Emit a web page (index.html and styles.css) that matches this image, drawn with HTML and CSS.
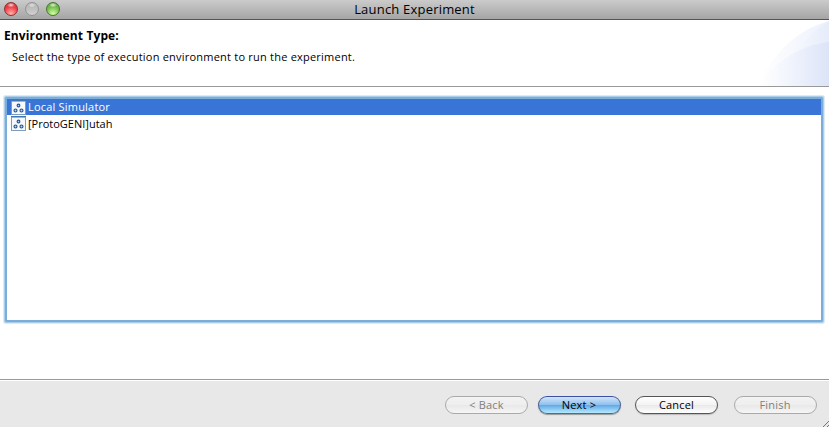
FILE: index.html
```
<!DOCTYPE html>
<html lang="en">
<head>
<meta charset="utf-8">
<title>Launch Experiment</title>
<link rel="stylesheet" href="styles.css">
</head>
<body>
<svg class="defs" width="0" height="0" aria-hidden="true">
  <symbol id="sim" viewBox="0 0 15 15">
    <rect x=".5" y=".5" width="14" height="14" fill="#f6fafd" stroke="#7e9cc0"/>
    <path d="M0 .5h15" stroke="#3f74b5"/>
    <path d="M1 1.5h13" stroke="#8fb8e6"/>
    <g fill="#b9d0ec" stroke="#26508c" stroke-width="1.1"><circle cx="7.5" cy="5.5" r="1.4"/><circle cx="4.5" cy="10.5" r="1.5"/><circle cx="10.5" cy="10.5" r="1.5"/></g>
  </symbol>
</svg>
<div class="window">
  <div class="titlebar">
    <div class="lights"><i class="light red"></i><i class="light gray"></i><i class="light green"></i></div>
    <span class="title">Launch Experiment</span>
  </div>
  <header class="header">
    <svg class="swoosh" width="75" height="66" viewBox="0 0 75 66" aria-hidden="true">
      <defs>
        <linearGradient id="g1"><stop offset="0" stop-color="#fff"/><stop offset="1" stop-color="#edf1fc"/></linearGradient>
        <linearGradient id="g2"><stop offset="0" stop-color="#f4f7fe" stop-opacity="0"/><stop offset="1" stop-color="#dce4f8"/></linearGradient>
      </defs>
      <path d="M5 66C18 34 42 10 75 1V66z" fill="url(#g1)"/>
      <path d="M28 66C36 37 52 14 75 1V66z" fill="url(#g2)" opacity=".4"/>
      <path d="M5 66C20 43 43 26 75 22V66z" fill="url(#g2)"/>
    </svg>
    <h1 class="heading">Environment Type:</h1>
    <p class="subtitle">Select the type of execution environment to run the experiment.</p>
  </header>
  <main class="content">
    <ul class="list">
      <li class="row selected"><svg class="icon"><use href="#sim"/></svg><span class="local">Local Simulator</span></li>
      <li class="row"><svg class="icon"><use href="#sim"/></svg><span class="proto">[ProtoGENI]utah</span></li>
    </ul>
  </main>
  <footer class="footer">
    <button class="button" disabled>&lt; Back</button>
    <button class="button primary">Next &gt;</button>
    <button class="button">Cancel</button>
    <button class="button" disabled>Finish</button>
    <svg class="grip" width="6" height="6" viewBox="0 0 6 6" aria-hidden="true"><path d="M0 6L6 0M4 6L6 4" stroke="#777"/></svg>
  </footer>
</div>
</body>
</html>
```
FILE: styles.css
```
* { box-sizing: border-box; }
body { margin: 0; overflow: hidden; background: #fff; color: #000; font: 11px/16px "Open Sans", "Noto Sans", sans-serif; }
.defs { position: absolute; }
.window { display: flex; flex-direction: column; width: 829px; height: 427px; }
.titlebar { position: relative; display: flex; justify-content: center; height: 20px; background: linear-gradient(#cbcbcb, #a5a5a5); border-bottom: 1px solid #555; }
.title { font-size: 13px; line-height: 18px; letter-spacing: .2px; }
.lights { position: absolute; left: 4px; top: 2px; display: flex; gap: 7px; }
.light { width: 14px; height: 14px; border-radius: 50%; border: 1px solid; }
.red { border-color: #8d3034; background: radial-gradient(ellipse 4px 2.5px at 50% 2px, #fffc, transparent), radial-gradient(circle at 50% 90%, #ffb3a8, #ed434b 55%, #c52632); }
.gray { border-color: #929292; background: radial-gradient(ellipse 4px 2.5px at 50% 2px, #fff9, transparent), linear-gradient(#b0b0b0, #d0d0d0); }
.green { border-color: #46762f; background: radial-gradient(ellipse 4px 2.5px at 50% 2px, #fffc, transparent), radial-gradient(circle at 50% 90%, #d6ffa5, #79bf50 55%, #559a3a); }
.header { position: relative; height: 67px; padding: 7px 4px; border-bottom: 1px solid #999; }
.heading { position: relative; margin: 0; font-size: 12px; line-height: 18px; font-weight: 700; letter-spacing: .12px; }
.subtitle { position: relative; margin: 4px 0 0 8px; letter-spacing: .22px; white-space: nowrap; }
.swoosh { position: absolute; right: 0; top: 0; }
.content { flex: 1; padding: 10px 6px 0 5px; }
.list { height: 225px; margin: 0; padding: 0; list-style: none; border: 2px solid #7badd9; box-shadow: 0 0 0 1px #a9cdea, 0 0 0 2px #dcebf6; border-radius: 1px; }
.row { display: flex; align-items: center; gap: 2px; height: 17px; padding-left: 4px; line-height: 15px; }
.row span { margin-top: -1px; }
.selected { height: 16px; background: #3875d7; color: #fff; }
.local { letter-spacing: .2px; }
.icon { width: 15px; height: 15px; }
.footer { position: relative; display: flex; gap: 14.5px; height: 48px; padding: 16px 12px 0 445px; border-top: 1px solid #999; background: #e8e8e8; box-shadow: inset 0 1px #fff; }
.button { flex: none; width: 83px; height: 18px; padding: 0; border: 1px solid #555; border-radius: 9px; background: linear-gradient(#fff, #f3f3f3 48%, #e9e9e9 52%, #fff); color: #000; font: inherit; line-height: 16px; letter-spacing: .2px; box-shadow: 0 1px 1px #bbb; }
.button:disabled { border-color: #aaa; background: linear-gradient(#f3f3f3, #eee 50%, #e9e9e9 52%, #f5f5f5); color: #808080; box-shadow: none; }
.primary { margin-left: -5px; border-color: #3c4fa5 #45618e #596a7c; background: linear-gradient(#d1e5f8, #8fc1ef 48%, #62a9e6 52%, #b6e9ff); box-shadow: 0 1px 1px #999; }
.button:last-of-type { margin-left: 1px; }
.grip { position: absolute; right: 0; bottom: 0; }
```
